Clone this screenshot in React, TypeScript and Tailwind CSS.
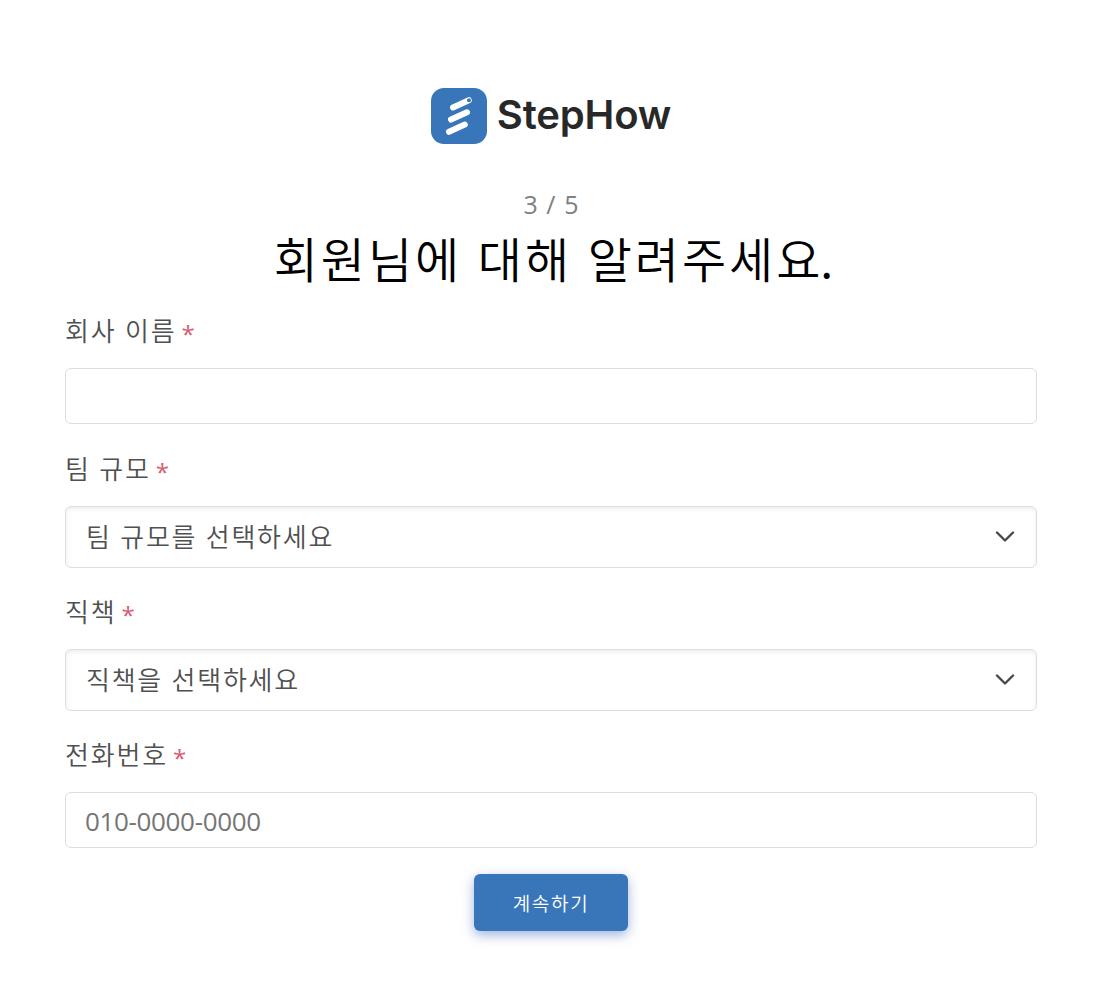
import type { ReactNode } from 'react'

function Logo() {
  return (
    <div className="flex h-14 items-center gap-2.5">
      <svg className="size-14" viewBox="0 0 56 56" fill="none" aria-hidden="true">
        <rect width="56" height="56" rx="13" fill="#3875b9" />
        <g stroke="#fff" strokeWidth="6" strokeLinecap="round">
          <path d="M22 19.5 37.8 12.2" />
          <path d="M20 31.6 36 24.3" />
          <path d="M18 43.8 33.8 36.6" />
        </g>
        <circle cx="38" cy="12.2" r="2" fill="#3875b9" />
      </svg>
      <span className="pb-[3px] font-[Inter,sans-serif] text-[40px] leading-none font-semibold tracking-[-0.15px] text-[#282828]">
        StepHow
      </span>
    </div>
  )
}

function Field({ label, children }: { label: string; children: ReactNode }) {
  return (
    <div>
      <label className="flex h-[33px] items-center gap-[5px] text-[26px] tracking-[1.8px] text-[#505050] [word-spacing:1px]">
        {label}
        <span className="pt-2 font-['Open_Sans',sans-serif] text-[24px] font-normal tracking-normal text-[#d75a70]">
          *
        </span>
      </label>
      <div className="mt-[22px]">{children}</div>
    </div>
  )
}

function TextInput({ placeholder }: { placeholder?: string }) {
  return (
    <input
      type="text"
      placeholder={placeholder}
      className="block h-14 w-full rounded-md border border-[#dedede] bg-white px-[19px] pt-0.5 font-['Open_Sans','Noto_Sans_CJK_KR',sans-serif] text-[26px] font-normal tracking-[-0.35px] outline-none placeholder:text-[#757575]"
    />
  )
}

function SelectBox({ text }: { text: string }) {
  return (
    <button
      type="button"
      className="flex h-[62px] w-full items-center justify-between rounded-md border border-[#dedede] bg-white pr-[21px] pl-5 text-[26px] tracking-[1.75px] text-[#505050] shadow-[inset_0_2px_4px_rgba(0,0,0,0.07)] [word-spacing:1px]"
    >
      <span className="pb-1">{text}</span>
      <svg className="h-3 w-5" viewBox="0 0 20 12" fill="none" aria-hidden="true">
        <path d="m2 1.5 8 8 8-8" stroke="#484848" strokeWidth="2.4" strokeLinecap="round" strokeLinejoin="round" />
      </svg>
    </button>
  )
}

export default function App() {
  return (
    <main className="flex h-[984px] flex-col bg-white pt-[88px] pr-[67px] pl-[65px] font-['Noto_Sans_CJK_KR',sans-serif] font-[350]">
      <header className="flex flex-col items-center">
        <Logo />
        <p className="mt-[41px] h-[37px] pl-px font-['Open_Sans',sans-serif] text-[25px] leading-[38px] font-normal tracking-[1.1px] text-[#808080]">
          3 / 5
        </p>
        <h1 className="h-[70px] pl-[5px] text-[48px] leading-[70px] tracking-[2.95px] text-black [word-spacing:2px]">
          회원님에 대해 알려주세<span className="tracking-normal">요.</span>
        </h1>
      </header>

      <form className="mt-[21px] flex flex-col">
        <Field label="회사 이름">
          <TextInput />
        </Field>
        <div className="mt-[27px]">
          <Field label="팀 규모">
            <SelectBox text="팀 규모를 선택하세요" />
          </Field>
        </div>
        <div className="mt-[26px]">
          <Field label="직책">
            <SelectBox text="직책을 선택하세요" />
          </Field>
        </div>
        <div className="mt-[26px]">
          <Field label="전화번호">
            <TextInput placeholder="010-0000-0000" />
          </Field>
        </div>
        <button
          type="button"
          className="mt-[26px] h-[57px] w-[154px] self-center rounded-md bg-[#3875b9] pt-0.5 text-[19px] tracking-[1.7px] text-white shadow-[0_4px_12px_rgba(65,105,190,0.5)]"
        >
          계속하기
        </button>
      </form>
    </main>
  )
}
